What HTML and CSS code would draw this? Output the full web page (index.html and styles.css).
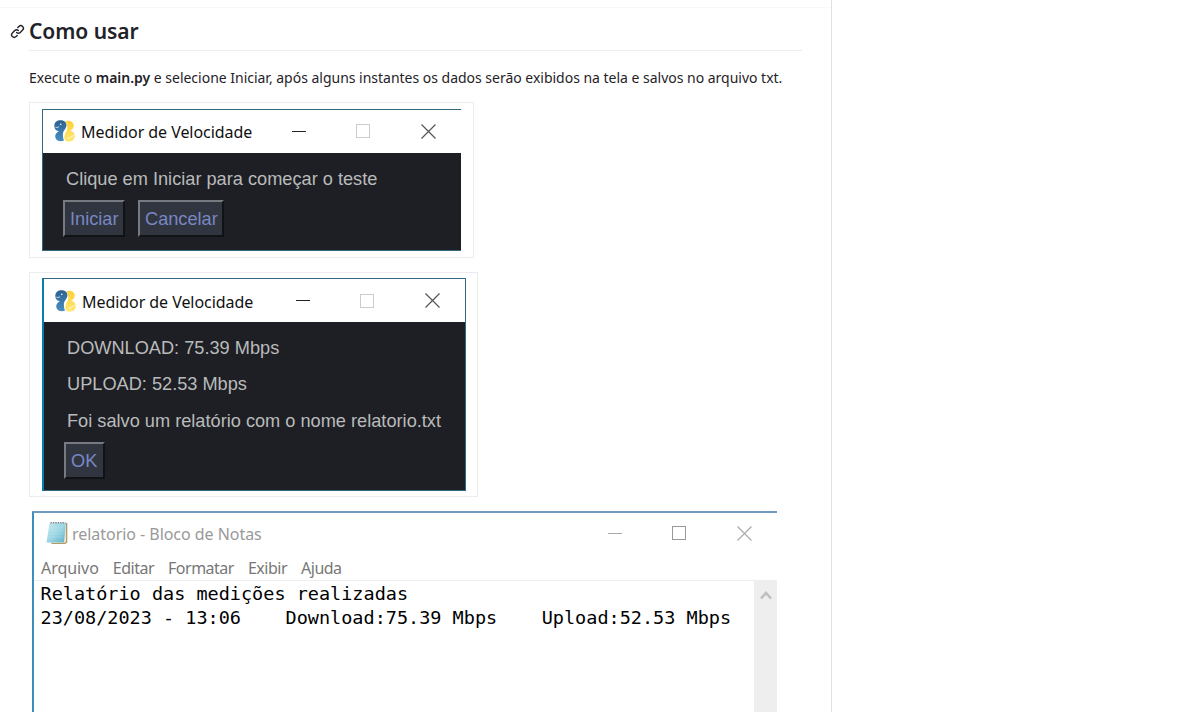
FILE: index.html
```html
<!DOCTYPE html>
<html lang="pt-BR">
<head>
<meta charset="utf-8">
<title>Como usar</title>
<link rel="stylesheet" href="styles.css">
</head>
<body>
<svg class="defs" width="0" height="0" aria-hidden="true">
  <defs>
    <linearGradient id="blue" x1="0" y1="0" x2="0" y2="1"><stop offset="0" stop-color="#2b618f"/><stop offset="1" stop-color="#4a8fc4"/></linearGradient>
    <linearGradient id="yellow" x1="0" y1="0" x2="0" y2="1"><stop offset="0" stop-color="#ffcf35"/><stop offset="1" stop-color="#ffe873"/></linearGradient>
    <linearGradient id="paper" x1="0" y1="0" x2="1" y2="1"><stop offset="0" stop-color="#c9eaf2"/><stop offset=".5" stop-color="#9dd6e4"/><stop offset="1" stop-color="#5fb3c9"/></linearGradient>
    <symbol id="python" viewBox="0 0 21 22">
      <path fill="url(#yellow)" d="M20.700 16C20.700 20 17.800 21.800 14.300 21.700C11.500 21.600 10 20 10.300 16.800C10.500 13.300 13.300 11.200 13.300 8C13.300 5 12.500 2.500 11.500 1.500C14.500-.2 19 1 19.700 4.800C20.200 8 18 9.500 16 11C18.800 11 20.700 13 20.700 16z"/>
      <path fill="url(#blue)" d="M.3 6C.3 2 3.200.2 6.700.3C10.500.4 12.700 2.500 12.400 5.800C12 9.200 9 10.800 8.900 14C8.800 17 9.500 19.500 10 20.500C6.500 22.200 2 21 1.300 17.200C.8 14 3 12.500 5 11C2.200 11 .3 9 .3 6z"/>
      <path fill="none" stroke="#fff" stroke-width=".8" d="M1.500 7.200c1.500.6 2.700.2 3.600-.9M15.500 17.700c1.200-.8 2.500-1.800 4-2"/>
      <circle cx="6.800" cy="4.300" r=".8" fill="#fff"/><circle cx="14.500" cy="18" r=".7" fill="#fff"/>
    </symbol>
    <symbol id="close" viewBox="0 0 15 15"><path fill="none" stroke="currentColor" stroke-width="1.200" d="M.5.500l14 14M14.500.500l-14 14"/></symbol>
  </defs>
</svg>
<main class="readme">
  <h2 class="heading">
    <svg class="anchor" viewBox="0 0 16 16"><path fill="#1f2328" d="m7.775 3.275 1.250-1.250a3.500 3.500 0 1 1 4.950 4.950l-2.500 2.500a3.500 3.500 0 0 1-4.950 0 .751.751 0 0 1 .018-1.042.751.751 0 0 1 1.042-.018 1.998 1.998 0 0 0 2.830 0l2.500-2.500a2.002 2.002 0 0 0-2.830-2.830l-1.250 1.250a.751.751 0 0 1-1.042-.018.751.751 0 0 1-.018-1.042Zm-4.690 9.640a1.998 1.998 0 0 0 2.830 0l1.250-1.250a.751.751 0 0 1 1.042.018.751.751 0 0 1 .018 1.042l-1.250 1.250a3.500 3.500 0 1 1-4.950-4.950l2.500-2.500a3.500 3.500 0 0 1 4.950 0 .751.751 0 0 1-.018 1.042.751.751 0 0 1-1.042.018 1.998 1.998 0 0 0-2.830 0l-2.500 2.500a1.998 1.998 0 0 0 0 2.830Z"/></svg>
    <span class="heading-text">Como usar</span>
  </h2>
  <p class="intro">Execute o <strong>main.py</strong> e selecione Iniciar, após alguns instantes os dados serão exibidos na tela e salvos no arquivo txt.</p>

  <section class="frame frame-start">
    <div class="window">
      <header class="titlebar">
        <svg class="app-icon"><use href="#python"/></svg>
        <span class="title">Medidor de Velocidade</span>
        <span class="controls"><i class="min"></i><i class="max"></i><svg class="close"><use href="#close"/></svg></span>
      </header>
      <div class="body">
        <div class="line prompt">Clique em Iniciar para começar o teste</div>
        <div class="buttons"><span class="btn btn-start">Iniciar</span><span class="btn btn-cancel">Cancelar</span></div>
      </div>
    </div>
  </section>

  <section class="frame frame-result">
    <div class="window">
      <header class="titlebar">
        <svg class="app-icon"><use href="#python"/></svg>
        <span class="title">Medidor de Velocidade</span>
        <span class="controls"><i class="min"></i><i class="max"></i><svg class="close"><use href="#close"/></svg></span>
      </header>
      <div class="body">
        <div class="line">DOWNLOAD: 75.39 Mbps</div>
        <div class="line">UPLOAD: 52.53 Mbps</div>
        <div class="line saved">Foi salvo um relatório com o nome relatorio.txt</div>
        <div class="buttons"><span class="btn btn-ok">OK</span></div>
      </div>
    </div>
  </section>

  <section class="notepad">
    <header class="note-title">
      <svg class="note-icon" viewBox="0 0 22 24">
        <path fill="#b39a6b" d="M19.500 2h1.800v19.500l-2 1.500H5.500v-2z"/>
        <path fill="#efe6c8" d="M19 3h1v18l-2 1H6v-1.500z"/>
        <path fill="url(#paper)" d="M3.500 2H20l-2 19.500H.500z"/>
        <path fill="none" stroke="#fff" stroke-opacity=".2" stroke-width=".8" d="M4 7h14M3.500 10h14M3 13h14M2.500 16h14"/>
        <path fill="none" stroke="#7b8488" stroke-width="1.600" stroke-dasharray="1.400 1" d="M4.500 1.800h15"/>
      </svg>
      <span class="note-name">relatorio - Bloco de Notas</span>
      <span class="controls"><i class="min"></i><i class="max"></i><svg class="close"><use href="#close"/></svg></span>
    </header>
    <nav class="menu"><span class="menu-first">Arquivo</span><span>Editar</span><span>Formatar</span><span>Exibir</span><span>Ajuda</span></nav>
    <div class="editor">
      <pre class="content">Relatório das medições realizadas
23/08/2023 - 13:06    Download:75.39 Mbps    Upload:52.53 Mbps</pre>
      <div class="scrollbar"><svg class="arrow" viewBox="0 0 12 9"><path fill="none" stroke="#bfbfbf" stroke-width="2.600" d="M1 7.500l5-5.500 5 5.500"/></svg></div>
    </div>
  </section>
</main>
</body>
</html>
```
FILE: styles.css
```css
* { box-sizing: border-box; }
body { margin: 0; background: #fff; overflow: hidden; font-family: "Noto Sans", "Open Sans", sans-serif; color: #1f2328; }
.defs { display: block; }
.readme { width: 832px; height: 712px; overflow: hidden; padding: 7px 29px 0 29px; border-right: 1px solid #dfe2e5; background: linear-gradient(#f6f8fa, #f6f8fa) 0 7px / 831px 1px no-repeat; }
.heading { display: flex; align-items: center; height: 44px; margin: 0 0 0 -19px; padding-top: 4px; font-size: 21px; font-weight: 600; line-height: 40px; }
.anchor { width: 15px; height: 15px; margin-right: 4px; flex: none; }
.heading-text { flex: 1; height: 40px; border-bottom: 1px solid #e9edf0; letter-spacing: -.05px; }
.intro { margin: 17px 0 14px; height: 20px; line-height: 20px; font-size: 14px; white-space: nowrap; letter-spacing: -.015px; }
.intro strong { font-weight: 600; }

.frame { border: 1px solid #ececee; padding: 5px 12px 6px; }
.frame-start { width: 445px; height: 156px; margin-bottom: 14px; }
.frame-result { width: 449px; height: 225px; margin-bottom: 14px; }
.window { height: 100%; border: 1px solid #34687f; background: #1e1f24; }
.frame-start { padding-top: 6px; }
.frame-start .window { width: 419px; height: 142px; border-right: 0; }
.frame-result .window { width: 424px; height: 213px; border-left: 2px solid #0a7cae; }
.titlebar { display: flex; align-items: center; height: 43px; background: #fff; padding-left: 11px; color: #111; }
.app-icon { width: 21px; height: 22px; margin-right: 6px; flex: none; }
.title { width: 211px; flex: none; font-size: 16px; line-height: 24px; white-space: nowrap; padding-top: 2px; letter-spacing: -.06px; }
.frame-result .title { width: 214px; }
.frame-start .app-icon, .frame-start .title, .frame-start .controls { margin-top: -1px; }
.controls { display: flex; align-items: center; color: #555; }
.min { width: 14px; height: 1px; background: #222; }
.max { width: 14px; height: 14px; margin-left: 50px; border: 1px solid #ccc; }
.close { width: 15px; height: 15px; margin-left: 51px; }
.body { padding: 8px 0 0 23px; font: 18.2px/36px "Liberation Sans", Arial, sans-serif; color: #b9bbbb; }
.line { height: 36.3px; white-space: nowrap; }
.buttons { display: flex; gap: 13px; margin-left: -3px; padding-top: 3px; }
.btn { height: 37px; padding-left: 5px; border: 2px solid; border-color: #777a80 #111216 #111216 #777a80; background: #31353f; color: #7887c4; line-height: 35px; }
.btn-start { width: 62px; }
.btn-cancel { width: 86px; }
.btn-ok { width: 41px; }

.notepad { width: 745px; height: 220px; margin-left: 3px; border-top: 2px solid #5787ae; border-top-color: #6f9cc0; border-left: 2px solid #3c8fbd; display: flex; flex-direction: column; }
.note-title { display: flex; align-items: center; height: 40px; padding-left: 12px; color: #999; }
.note-icon { width: 22px; height: 24px; margin-right: 4px; flex: none; }
.note-name { width: 536px; font-size: 16px; white-space: nowrap; flex: none; letter-spacing: -.04px; padding-top: 1px; }
.note-title .controls { color: #aaa; }
.note-title .min { background: #aaa; }
.note-title .max { border-color: #999; }
.menu { display: flex; gap: 14px; height: 27px; padding-left: 7px; font-size: 16px; line-height: 30px; letter-spacing: -.5px; color: #777; }
.menu-first { letter-spacing: -.05px; }
.editor { display: flex; flex: 1; border-top: 1px solid #eee; }
.content { flex: 1; margin: 0; padding: 1px 0 0 6.500px; font: 18.5px/24px "DejaVu Sans Mono", monospace; color: #000; }
.scrollbar { width: 23px; background: #eee; display: flex; justify-content: center; align-items: flex-start; padding-top: 10px; }
.arrow { width: 12px; height: 9px; }
```
